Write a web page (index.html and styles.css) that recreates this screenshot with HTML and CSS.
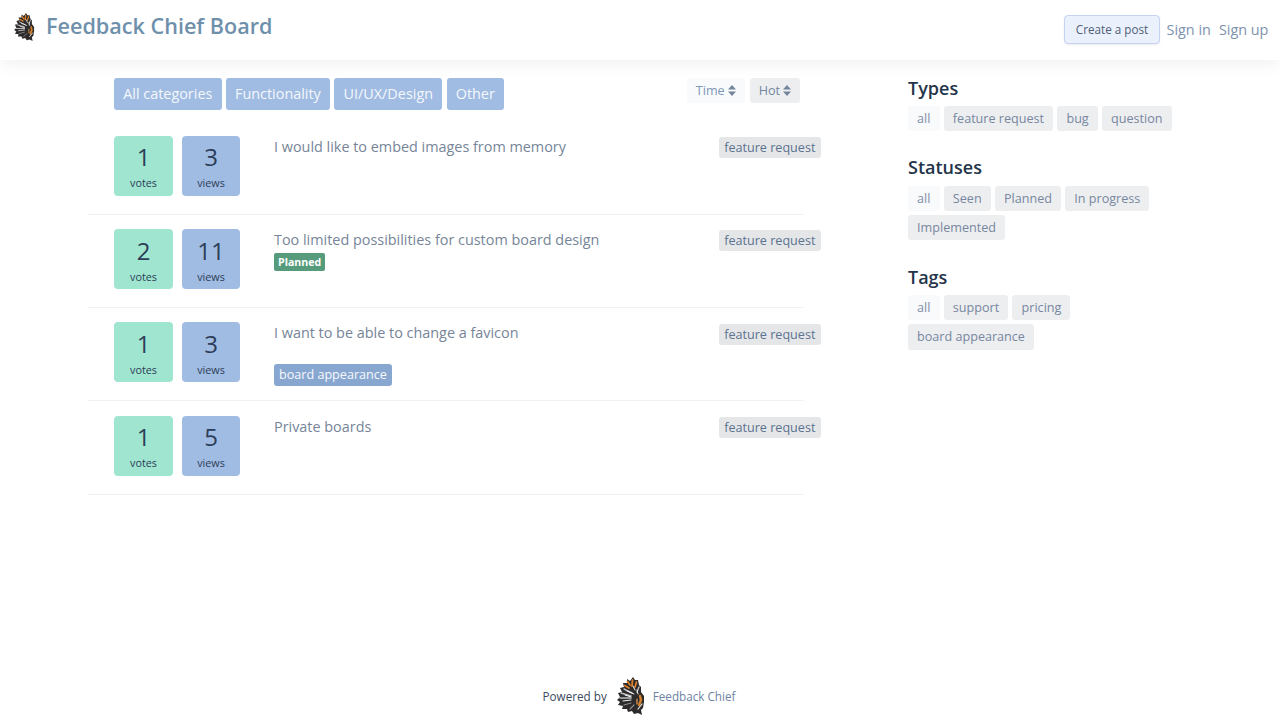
FILE: index.html
```html
<!DOCTYPE html>
<html lang="en">
<head>
<meta charset="utf-8">
<title>Feedback Chief Board</title>
<link rel="stylesheet" href="styles.css">
</head>
<body>
<svg class="defs" width="0" height="0" aria-hidden="true">
  <symbol id="chief" viewBox="0 0 28 38">
    <path fill="#2c2a2a" d="M16 0 18 3 21 3 22 8 24 10 24 15 27 19 27 25 26 31 24 33 25 38 21 36 17 37 15 34 11 35 10 32 5 32 6 29 1 28 3 25 0 23 3 20 1 16 5 15 3 11 7 10 6 6 10 6 10 2 13 4Z"/>
    <g fill="none" stroke-linecap="round">
      <path stroke="#d97f2b" stroke-width="1.8" d="M15 9 15.5 3M13 8 10.5 4.5M18 10 19.5 5M12 11 7.5 8.5"/>
      <path stroke="#bdbdbd" stroke-width="1.4" d="M15 16 7 12M14 19 4 16M14 21 3 21M20 15 22 10"/>
      <path stroke="#f3f3f3" stroke-width="1" d="M18 13 16 9M17 17 10 14M14 20 8 18M14 23 6 24M20 13 21 17"/>
      <path stroke="#8a8a8a" stroke-width="1.2" d="M14 26 7 28M17 28 13 32"/>
      <path stroke="#d6802c" stroke-width="2.4" d="M23 19 24 23 22 28"/>
      <path stroke="#e9a25b" stroke-width="1.2" d="M20 22 20 27"/>
      <path stroke="#f1eee9" stroke-width="1.2" d="M25 27 21 32"/>
    </g>
  </symbol>
</svg>
<header class="topbar">
  <a class="brand"><svg class="brand-logo"><use href="#chief"/></svg><span>Feedback Chief Board</span></a>
  <nav class="auth">
    <button class="create">Create a post</button>
    <a>Sign in</a>
    <a>Sign up</a>
  </nav>
</header>
<main class="content">
  <section class="board">
    <div class="toolbar">
      <div class="cats">
        <a class="cat">All categories</a>
        <a class="cat">Functionality</a>
        <a class="cat">UI/UX/Design</a>
        <a class="cat">Other</a>
      </div>
      <div class="sorts">
        <a class="sort sort-active">Time <svg class="caret" viewBox="0 0 8 11"><path d="M4 0 8 4.5H0ZM4 11 0 6.5H8Z"/></svg></a>
        <a class="sort">Hot <svg class="caret" viewBox="0 0 8 11"><path d="M4 0 8 4.5H0ZM4 11 0 6.5H8Z"/></svg></a>
      </div>
    </div>
    <article class="post">
      <div class="stat votes"><b>1</b><small>votes</small></div>
      <div class="stat views"><b>3</b><small>views</small></div>
      <div class="body"><p class="title">I would like to embed images from memory</p></div>
      <span class="type">feature request</span>
    </article>
    <article class="post">
      <div class="stat votes"><b>2</b><small>votes</small></div>
      <div class="stat views"><b>11</b><small>views</small></div>
      <div class="body"><p class="title">Too limited possibilities for custom board design</p><span class="status">Planned</span></div>
      <span class="type">feature request</span>
    </article>
    <article class="post">
      <div class="stat votes"><b>1</b><small>votes</small></div>
      <div class="stat views"><b>3</b><small>views</small></div>
      <div class="body"><p class="title">I want to be able to change a favicon</p><span class="tag">board appearance</span></div>
      <span class="type">feature request</span>
    </article>
    <article class="post">
      <div class="stat votes"><b>1</b><small>votes</small></div>
      <div class="stat views"><b>5</b><small>views</small></div>
      <div class="body"><p class="title">Private boards</p></div>
      <span class="type">feature request</span>
    </article>
  </section>
  <aside class="side">
    <section class="group">
      <h3>Types</h3>
      <div class="chips"><a class="chip chip-active">all</a><a class="chip">feature request</a><a class="chip">bug</a><a class="chip">question</a></div>
    </section>
    <section class="group">
      <h3>Statuses</h3>
      <div class="chips"><a class="chip chip-active">all</a><a class="chip">Seen</a><a class="chip">Planned</a><a class="chip">In progress</a><a class="chip">Implemented</a></div>
    </section>
    <section class="group">
      <h3>Tags</h3>
      <div class="chips"><a class="chip chip-active">all</a><a class="chip">support</a><a class="chip">pricing</a><a class="chip">board appearance</a></div>
    </section>
  </aside>
</main>
<footer class="foot">
  <span>Powered by</span>
  <svg class="foot-logo"><use href="#chief"/></svg>
  <a>Feedback Chief</a>
</footer>
</body>
</html>
```
FILE: styles.css
```css
* { box-sizing: border-box; }
html, body { margin: 0; height: 100%; }
body {
  height: 722px;
  overflow: hidden;
  display: flex;
  flex-direction: column;
  background: #fff;
  font-family: "Open Sans", sans-serif;
  color: #6f7f94;
}
.defs { position: absolute; }
.topbar {
  height: 60px;
  flex: none;
  display: flex;
  justify-content: space-between;
  padding: 0 11.6px 0 13.5px;
  background: #fff;
  box-shadow: 0 4px 16px rgba(0, 0, 0, .06);
}
.brand {
  display: flex;
  align-items: flex-start;
  gap: 11.5px;
  padding-top: 9.6px;
  font-size: 21.6px;
  line-height: 32px;
  font-weight: 600;
  color: #6f90ab;
}
.brand-logo { width: 21px; height: 28px; margin-top: 3.4px; }
.auth {
  display: flex;
  align-items: center;
  gap: 8px;
  height: 59px;
  font-size: 14.4px;
  color: #7d92ad;
}
.create {
  height: 29px;
  width: 96px;
  padding: 0 0 1px;
  margin-right: -1.5px;
  border: 1px solid #c6d2f2;
  border-radius: 4px;
  background: #ebf0fd;
  font: 11.7px "Open Sans", sans-serif;
  color: #4f5f75;
  box-shadow: 0 1px 2px rgba(0, 0, 0, .08);
}
.content { display: flex; padding: 18px 0 0 88px; flex: 1; }
.board { width: 716px; flex: none; }
.toolbar {
  display: flex;
  justify-content: space-between;
  height: 32px;
  padding-left: 26px;
  margin-bottom: 11.2px;
  margin-right: 4px;
}
.cats { display: flex; gap: 4.3px; }
.cat {
  height: 32px;
  padding: 0 9.2px;
  border-radius: 3px;
  background: #a1bce2;
  color: #f4f7fc;
  font-size: 14.4px;
  line-height: 32px;
}
.sorts { display: flex; gap: 5px; }
.sort {
  display: flex;
  align-items: center;
  gap: 3px;
  height: 25px;
  padding: 0 9px;
  border-radius: 3px;
  background: #edeef0;
  font-size: 12.6px;
  color: #7486a0;
}
.sort-active { background: #f8fafc; color: #7f97b5; }
.caret { width: 8px; height: 11px; fill: #74869c; }
.post {
  display: flex;
  height: 93.4px;
  padding: 14.4px 0 0 26px;
  border-bottom: 1px solid #f1f2f3;
}
.stat {
  flex: none;
  width: 59px;
  height: 60px;
  margin-right: 9px;
  border-radius: 4px;
  display: flex;
  flex-direction: column;
  align-items: center;
  color: #2b3d57;
}
.stat b { font-weight: 400; font-size: 24px; line-height: 30px; margin-top: 6.6px; }
.stat small { font-size: 10.8px; line-height: 16px; margin-top: 3px; }
.votes { background: #a0e5d0; }
.views { background: #a1bce2; width: 58px; }
.body { flex: none; width: 445px; margin-left: 25px; }
.title {
  margin: 1px 0 0;
  font-size: 14.4px;
  line-height: 20px;
  color: #768598;
}
.status {
  display: block;
  width: max-content;
  height: 18px;
  padding: 0 4px;
  margin-top: 2.8px;
  border-radius: 2px;
  background: #559b7c;
  color: #fff;
  font-size: 10.6px;
  font-weight: 700;
  line-height: 18px;
}
.tag {
  display: block;
  width: max-content;
  height: 22px;
  padding: 0 5px;
  margin-top: 20.8px;
  border-radius: 3px;
  background: #88a7d0;
  color: #f6f8fc;
  font-size: 12.6px;
  line-height: 22px;
}
.type {
  flex: none;
  height: 21px;
  margin-top: 1.3px;
  padding: 0 5.2px;
  border-radius: 3px;
  background: #e5e6e8;
  color: #5b7390;
  font-size: 12.6px;
  line-height: 21px;
}
.side { margin-left: 104px; width: 290px; margin-top: -2.25px; }
.group { margin-bottom: 24.1px; }
.group h3 {
  margin: 0 0 6.15px;
  font-size: 18px;
  font-weight: 600;
  line-height: 24px;
  color: #24344a;
}
.chips { display: flex; flex-wrap: wrap; gap: 4.2px 4.2px; }
.chip {
  height: 25.4px;
  padding: 0 9.1px;
  border-radius: 3px;
  background: #edeef0;
  font-size: 12.6px;
  line-height: 25px;
  color: #7787a0;
}
.chip-active { background: #f8fafc; color: #7f8fa6; }
.foot {
  flex: none;
  display: flex;
  justify-content: center;
  align-items: center;
  height: 40px;
  margin-bottom: 6px;
  padding-right: 2px;
  font-size: 11.7px;
  color: #3c4a5c;
}
.foot-logo { width: 28px; height: 38px; margin: 0 8px 0 10px; }
.foot a { color: #6d84a3; }
```
